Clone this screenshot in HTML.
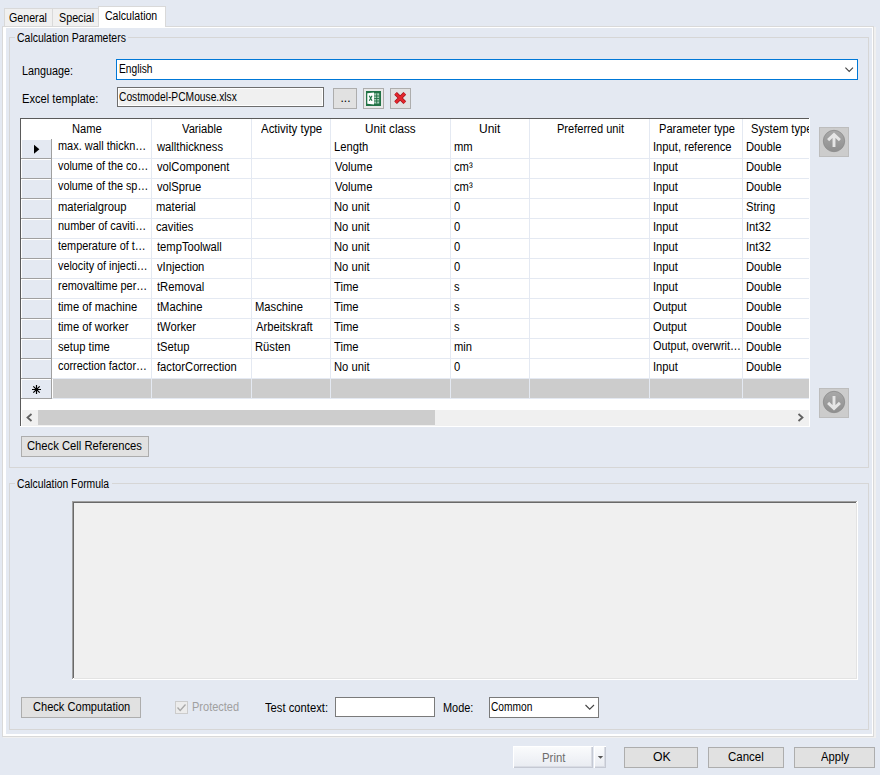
<!DOCTYPE html>
<html><head><meta charset="utf-8"><style>
html,body{margin:0;padding:0;}
body{width:880px;height:775px;position:relative;overflow:hidden;background:#e4e9f2;font-family:"Liberation Sans",sans-serif;}
div,svg{position:absolute;}
.t{white-space:pre;color:#000;transform-origin:0 0;}
</style></head><body>
<div style="left:4px;top:8px;width:49px;height:18px;background:#f0f0f0;"></div>
<div style="left:4px;top:8px;width:1px;height:18px;background:#d9d9d9;"></div>
<div style="left:4px;top:8px;width:49px;height:1px;background:#d9d9d9;"></div>
<div style="left:52px;top:8px;width:1px;height:18px;background:#d9d9d9;"></div>
<div style="left:53px;top:8px;width:46px;height:18px;background:#f0f0f0;"></div>
<div style="left:53px;top:8px;width:46px;height:1px;background:#d9d9d9;"></div>
<div class="t" style="left:9.26px;top:11px;font-size:12px;line-height:15px;color:#000;transform:scaleX(0.8889);">General</div>
<div class="t" style="left:58.51px;top:11px;font-size:12px;line-height:15px;color:#000;transform:scaleX(0.8945);">Special</div>
<div style="left:2px;top:26px;width:872px;height:711px;background:#d9d9d9;"></div>
<div style="left:874px;top:27px;width:2px;height:711px;background:#f0f0f0;"></div>
<div style="left:3px;top:737px;width:873px;height:1px;background:#f0f0f0;"></div>
<div style="left:3px;top:27px;width:870px;height:709px;background:#ffffff;"></div>
<div style="left:6px;top:28px;width:866px;height:706px;background:#e4e9f2;"></div>
<div style="left:98px;top:6px;width:68px;height:21px;background:#d9d9d9;"></div>
<div style="left:99px;top:7px;width:66px;height:21px;background:#ffffff;"></div>
<div class="t" style="left:105.46px;top:9px;font-size:12px;line-height:15px;color:#000;transform:scaleX(0.8796);">Calculation</div>
<div style="left:9px;top:37px;width:860px;height:431px;box-sizing:border-box;border:1px solid #d6d6d6;"></div>
<div style="left:15px;top:36px;width:113px;height:3px;background:#e4e9f2;"></div>
<div class="t" style="left:17.22px;top:31px;font-size:12px;line-height:15px;color:#000;transform:scaleX(0.8732);">Calculation Parameters</div>
<div class="t" style="left:21.71px;top:64px;font-size:12px;line-height:15px;color:#000;transform:scaleX(0.9004);">Language:</div>
<div class="t" style="left:21.69px;top:92px;font-size:12px;line-height:15px;color:#000;transform:scaleX(0.9292);">Excel template:</div>
<div style="left:116px;top:59px;width:742px;height:21px;background:#fff;box-sizing:border-box;border:1px solid #0078d7;"></div>
<div class="t" style="left:119.16px;top:62px;font-size:12px;line-height:15px;color:#000;transform:scaleX(0.8512);">English</div>
<svg style="left:845px;top:66px" width="10" height="7" viewBox="0 0 10 7"><path d="M0.4 1.6 L4.2 5.4 L8 1.6" fill="none" stroke="#444" stroke-width="1.1"/></svg>
<div style="left:117px;top:87px;width:207px;height:20px;background:#ffffff;box-sizing:border-box;border:1px solid #6d6d6d;"></div>
<div style="left:119px;top:89px;width:203px;height:16px;background:#f0f0f0;"></div>
<div class="t" style="left:119.48px;top:90px;font-size:12px;line-height:15px;color:#000;transform:scaleX(0.8536);">Costmodel-PCMouse.xlsx</div>
<div style="left:333px;top:88px;width:24px;height:21px;background:#e1e1e1;box-sizing:border-box;border:1px solid #adadad;"></div>
<div class="t" style="left:340.50px;top:91px;font-size:12px;line-height:15px;color:#000;">...</div>
<div style="left:363px;top:88px;width:21px;height:21px;background:#e9e9e9;box-sizing:border-box;border:1px solid #adadad;"></div>
<div style="left:390px;top:88px;width:21px;height:21px;background:#e1e1e1;box-sizing:border-box;border:1px solid #adadad;"></div>
<svg style="left:366px;top:91px" width="15" height="15" viewBox="0 0 15 15"><rect x="0" y="0" width="15" height="15" fill="#217346"/>
<rect x="8.2" y="2.3" width="5" height="10.2" fill="#a9cdb7"/>
<path d="M8.2 5 H13.2 M8.2 7.5 H13.2 M8.2 10 H13.2 M10.7 2.3 V12.5" stroke="#217346" stroke-width="0.9"/>
<path d="M1.3 2.2 L8 1.5 L8 13.5 L1.3 12.8 Z" fill="#ffffff"/>
<path d="M3.3 4.8 L6 9.8 M6 4.8 L3.3 9.8" stroke="#217346" stroke-width="1.2"/></svg>
<svg style="left:393px;top:91px" width="15" height="15" viewBox="0 0 15 15"><path d="M2.6 2.4 L11.8 11.6 M11.8 2.4 L2.6 11.6" stroke="#9c1218" stroke-width="3.8"/>
<path d="M2.6 2.4 L11.8 11.6 M11.8 2.4 L2.6 11.6" stroke="#e4262c" stroke-width="2.5"/></svg>
<div style="left:20px;top:118px;width:790px;height:309px;background:#ffffff;"></div>
<div style="left:20px;top:118px;width:789px;height:309px;overflow:hidden;">
<div style="left:0px;top:0px;width:790px;height:1px;background:#5a5a5a;"></div>
<div style="left:0px;top:0px;width:1px;height:308px;background:#5a5a5a;"></div>
<div style="left:131px;top:1px;width:1px;height:279px;background:#e4e9f2;"></div>
<div style="left:231px;top:1px;width:1px;height:279px;background:#e4e9f2;"></div>
<div style="left:310px;top:1px;width:1px;height:279px;background:#e4e9f2;"></div>
<div style="left:430px;top:1px;width:1px;height:279px;background:#e4e9f2;"></div>
<div style="left:509px;top:1px;width:1px;height:279px;background:#e4e9f2;"></div>
<div style="left:629px;top:1px;width:1px;height:279px;background:#e4e9f2;"></div>
<div style="left:722px;top:1px;width:1px;height:279px;background:#e4e9f2;"></div>
<div class="t" style="left:52.09px;top:4px;font-size:12px;line-height:15px;color:#000;transform:scaleX(0.9248);">Name</div>
<div class="t" style="left:161.95px;top:4px;font-size:12px;line-height:15px;color:#000;transform:scaleX(0.9323);">Variable</div>
<div class="t" style="left:241.08px;top:4px;font-size:12px;line-height:15px;color:#000;transform:scaleX(0.9549);">Activity type</div>
<div class="t" style="left:345.30px;top:4px;font-size:12px;line-height:15px;color:#000;transform:scaleX(0.9752);">Unit class</div>
<div class="t" style="left:459.38px;top:4px;font-size:12px;line-height:15px;color:#000;transform:scaleX(0.9987);">Unit</div>
<div class="t" style="left:537.09px;top:4px;font-size:12px;line-height:15px;color:#000;transform:scaleX(0.9214);">Preferred unit</div>
<div class="t" style="left:638.69px;top:4px;font-size:12px;line-height:15px;color:#000;transform:scaleX(0.9252);">Parameter type</div>
<div class="t" style="left:730.59px;top:4px;font-size:12px;line-height:15px;color:#000;transform:scaleX(0.9300);">System type</div>
<div style="left:2px;top:22px;width:29px;height:18px;background:#e4e9f2;"></div>
<div style="left:1px;top:40px;width:31px;height:1px;background:#a0a0a0;"></div>
<div style="left:32px;top:40px;width:758px;height:1px;background:#e4e9f2;"></div>
<div class="t" style="left:37.67px;top:21px;font-size:12px;line-height:15px;color:#000;transform:scaleX(0.9123);">max. wall thickn…</div>
<div class="t" style="left:136.82px;top:22px;font-size:12px;line-height:15px;color:#000;transform:scaleX(0.9340);">wallthickness</div>
<div class="t" style="left:313.68px;top:22px;font-size:12px;line-height:15px;color:#000;transform:scaleX(0.9340);">Length</div>
<div class="t" style="left:433.86px;top:22px;font-size:12px;line-height:15px;color:#000;transform:scaleX(0.9340);">mm</div>
<div class="t" style="left:632.57px;top:22px;font-size:12px;line-height:15px;color:#000;transform:scaleX(0.9340);">Input, reference</div>
<div class="t" style="left:725.68px;top:22px;font-size:12px;line-height:15px;color:#000;transform:scaleX(0.9340);">Double</div>
<div style="left:2px;top:42px;width:29px;height:18px;background:#e4e9f2;"></div>
<div style="left:1px;top:60px;width:31px;height:1px;background:#a0a0a0;"></div>
<div style="left:32px;top:60px;width:758px;height:1px;background:#e4e9f2;"></div>
<div class="t" style="left:38.36px;top:41px;font-size:12px;line-height:15px;color:#000;transform:scaleX(0.9016);">volume of the co…</div>
<div class="t" style="left:136.76px;top:42px;font-size:12px;line-height:15px;color:#000;transform:scaleX(0.9340);">volComponent</div>
<div class="t" style="left:314.55px;top:42px;font-size:12px;line-height:15px;color:#000;transform:scaleX(0.9340);">Volume</div>
<div class="t" style="left:434.12px;top:42px;font-size:12px;line-height:15px;color:#000;transform:scaleX(0.9340);">cm³</div>
<div class="t" style="left:632.57px;top:42px;font-size:12px;line-height:15px;color:#000;transform:scaleX(0.9340);">Input</div>
<div class="t" style="left:725.68px;top:42px;font-size:12px;line-height:15px;color:#000;transform:scaleX(0.9340);">Double</div>
<div style="left:2px;top:62px;width:29px;height:18px;background:#e4e9f2;"></div>
<div style="left:1px;top:80px;width:31px;height:1px;background:#a0a0a0;"></div>
<div style="left:32px;top:80px;width:758px;height:1px;background:#e4e9f2;"></div>
<div class="t" style="left:38.36px;top:61px;font-size:12px;line-height:15px;color:#000;transform:scaleX(0.9016);">volume of the sp…</div>
<div class="t" style="left:136.76px;top:62px;font-size:12px;line-height:15px;color:#000;transform:scaleX(0.9340);">volSprue</div>
<div class="t" style="left:314.55px;top:62px;font-size:12px;line-height:15px;color:#000;transform:scaleX(0.9340);">Volume</div>
<div class="t" style="left:434.12px;top:62px;font-size:12px;line-height:15px;color:#000;transform:scaleX(0.9340);">cm³</div>
<div class="t" style="left:632.57px;top:62px;font-size:12px;line-height:15px;color:#000;transform:scaleX(0.9340);">Input</div>
<div class="t" style="left:725.68px;top:62px;font-size:12px;line-height:15px;color:#000;transform:scaleX(0.9340);">Double</div>
<div style="left:2px;top:82px;width:29px;height:18px;background:#e4e9f2;"></div>
<div style="left:1px;top:100px;width:31px;height:1px;background:#a0a0a0;"></div>
<div style="left:32px;top:100px;width:758px;height:1px;background:#e4e9f2;"></div>
<div class="t" style="left:37.66px;top:82px;font-size:12px;line-height:15px;color:#000;transform:scaleX(0.9340);">materialgroup</div>
<div class="t" style="left:136.06px;top:82px;font-size:12px;line-height:15px;color:#000;transform:scaleX(0.9340);">material</div>
<div class="t" style="left:313.68px;top:82px;font-size:12px;line-height:15px;color:#000;transform:scaleX(0.9340);">No unit</div>
<div class="t" style="left:434.16px;top:82px;font-size:12px;line-height:15px;color:#000;transform:scaleX(0.9340);">0</div>
<div class="t" style="left:632.57px;top:82px;font-size:12px;line-height:15px;color:#000;transform:scaleX(0.9340);">Input</div>
<div class="t" style="left:726.09px;top:82px;font-size:12px;line-height:15px;color:#000;transform:scaleX(0.9340);">String</div>
<div style="left:2px;top:102px;width:29px;height:18px;background:#e4e9f2;"></div>
<div style="left:1px;top:120px;width:31px;height:1px;background:#a0a0a0;"></div>
<div style="left:32px;top:120px;width:758px;height:1px;background:#e4e9f2;"></div>
<div class="t" style="left:37.67px;top:101px;font-size:12px;line-height:15px;color:#000;transform:scaleX(0.9122);">number of caviti…</div>
<div class="t" style="left:136.32px;top:102px;font-size:12px;line-height:15px;color:#000;transform:scaleX(0.9340);">cavities</div>
<div class="t" style="left:313.68px;top:102px;font-size:12px;line-height:15px;color:#000;transform:scaleX(0.9340);">No unit</div>
<div class="t" style="left:434.16px;top:102px;font-size:12px;line-height:15px;color:#000;transform:scaleX(0.9340);">0</div>
<div class="t" style="left:632.57px;top:102px;font-size:12px;line-height:15px;color:#000;transform:scaleX(0.9340);">Input</div>
<div class="t" style="left:725.57px;top:102px;font-size:12px;line-height:15px;color:#000;transform:scaleX(0.9340);">Int32</div>
<div style="left:2px;top:122px;width:29px;height:18px;background:#e4e9f2;"></div>
<div style="left:1px;top:140px;width:31px;height:1px;background:#a0a0a0;"></div>
<div style="left:32px;top:140px;width:758px;height:1px;background:#e4e9f2;"></div>
<div class="t" style="left:38.24px;top:121px;font-size:12px;line-height:15px;color:#000;transform:scaleX(0.9062);">temperature of t…</div>
<div class="t" style="left:136.63px;top:122px;font-size:12px;line-height:15px;color:#000;transform:scaleX(0.9340);">tempToolwall</div>
<div class="t" style="left:313.68px;top:122px;font-size:12px;line-height:15px;color:#000;transform:scaleX(0.9340);">No unit</div>
<div class="t" style="left:434.16px;top:122px;font-size:12px;line-height:15px;color:#000;transform:scaleX(0.9340);">0</div>
<div class="t" style="left:632.57px;top:122px;font-size:12px;line-height:15px;color:#000;transform:scaleX(0.9340);">Input</div>
<div class="t" style="left:725.57px;top:122px;font-size:12px;line-height:15px;color:#000;transform:scaleX(0.9340);">Int32</div>
<div style="left:2px;top:142px;width:29px;height:18px;background:#e4e9f2;"></div>
<div style="left:1px;top:160px;width:31px;height:1px;background:#a0a0a0;"></div>
<div style="left:32px;top:160px;width:758px;height:1px;background:#e4e9f2;"></div>
<div class="t" style="left:38.36px;top:141px;font-size:12px;line-height:15px;color:#000;transform:scaleX(0.9007);">velocity of injecti…</div>
<div class="t" style="left:136.76px;top:142px;font-size:12px;line-height:15px;color:#000;transform:scaleX(0.9340);">vInjection</div>
<div class="t" style="left:313.68px;top:142px;font-size:12px;line-height:15px;color:#000;transform:scaleX(0.9340);">No unit</div>
<div class="t" style="left:434.16px;top:142px;font-size:12px;line-height:15px;color:#000;transform:scaleX(0.9340);">0</div>
<div class="t" style="left:632.57px;top:142px;font-size:12px;line-height:15px;color:#000;transform:scaleX(0.9340);">Input</div>
<div class="t" style="left:725.68px;top:142px;font-size:12px;line-height:15px;color:#000;transform:scaleX(0.9340);">Double</div>
<div style="left:2px;top:162px;width:29px;height:18px;background:#e4e9f2;"></div>
<div style="left:1px;top:180px;width:31px;height:1px;background:#a0a0a0;"></div>
<div style="left:32px;top:180px;width:758px;height:1px;background:#e4e9f2;"></div>
<div class="t" style="left:37.67px;top:161px;font-size:12px;line-height:15px;color:#000;transform:scaleX(0.9100);">removaltime per…</div>
<div class="t" style="left:136.63px;top:162px;font-size:12px;line-height:15px;color:#000;transform:scaleX(0.9340);">tRemoval</div>
<div class="t" style="left:314.35px;top:162px;font-size:12px;line-height:15px;color:#000;transform:scaleX(0.9340);">Time</div>
<div class="t" style="left:434.29px;top:162px;font-size:12px;line-height:15px;color:#000;transform:scaleX(0.9340);">s</div>
<div class="t" style="left:632.57px;top:162px;font-size:12px;line-height:15px;color:#000;transform:scaleX(0.9340);">Input</div>
<div class="t" style="left:725.68px;top:162px;font-size:12px;line-height:15px;color:#000;transform:scaleX(0.9340);">Double</div>
<div style="left:2px;top:182px;width:29px;height:18px;background:#e4e9f2;"></div>
<div style="left:1px;top:200px;width:31px;height:1px;background:#a0a0a0;"></div>
<div style="left:32px;top:200px;width:758px;height:1px;background:#e4e9f2;"></div>
<div class="t" style="left:38.23px;top:182px;font-size:12px;line-height:15px;color:#000;transform:scaleX(0.9340);">time of machine</div>
<div class="t" style="left:136.63px;top:182px;font-size:12px;line-height:15px;color:#000;transform:scaleX(0.9340);">tMachine</div>
<div class="t" style="left:234.68px;top:182px;font-size:12px;line-height:15px;color:#000;transform:scaleX(0.9340);">Maschine</div>
<div class="t" style="left:314.35px;top:182px;font-size:12px;line-height:15px;color:#000;transform:scaleX(0.9340);">Time</div>
<div class="t" style="left:434.29px;top:182px;font-size:12px;line-height:15px;color:#000;transform:scaleX(0.9340);">s</div>
<div class="t" style="left:633.07px;top:182px;font-size:12px;line-height:15px;color:#000;transform:scaleX(0.9340);">Output</div>
<div class="t" style="left:725.68px;top:182px;font-size:12px;line-height:15px;color:#000;transform:scaleX(0.9340);">Double</div>
<div style="left:2px;top:202px;width:29px;height:18px;background:#e4e9f2;"></div>
<div style="left:1px;top:220px;width:31px;height:1px;background:#a0a0a0;"></div>
<div style="left:32px;top:220px;width:758px;height:1px;background:#e4e9f2;"></div>
<div class="t" style="left:38.23px;top:202px;font-size:12px;line-height:15px;color:#000;transform:scaleX(0.9340);">time of worker</div>
<div class="t" style="left:136.63px;top:202px;font-size:12px;line-height:15px;color:#000;transform:scaleX(0.9340);">tWorker</div>
<div class="t" style="left:235.58px;top:202px;font-size:12px;line-height:15px;color:#000;transform:scaleX(0.9340);">Arbeitskraft</div>
<div class="t" style="left:314.35px;top:202px;font-size:12px;line-height:15px;color:#000;transform:scaleX(0.9340);">Time</div>
<div class="t" style="left:434.29px;top:202px;font-size:12px;line-height:15px;color:#000;transform:scaleX(0.9340);">s</div>
<div class="t" style="left:633.07px;top:202px;font-size:12px;line-height:15px;color:#000;transform:scaleX(0.9340);">Output</div>
<div class="t" style="left:725.68px;top:202px;font-size:12px;line-height:15px;color:#000;transform:scaleX(0.9340);">Double</div>
<div style="left:2px;top:222px;width:29px;height:18px;background:#e4e9f2;"></div>
<div style="left:1px;top:240px;width:31px;height:1px;background:#a0a0a0;"></div>
<div style="left:32px;top:240px;width:758px;height:1px;background:#e4e9f2;"></div>
<div class="t" style="left:38.09px;top:222px;font-size:12px;line-height:15px;color:#000;transform:scaleX(0.9340);">setup time</div>
<div class="t" style="left:136.63px;top:222px;font-size:12px;line-height:15px;color:#000;transform:scaleX(0.9340);">tSetup</div>
<div class="t" style="left:234.68px;top:222px;font-size:12px;line-height:15px;color:#000;transform:scaleX(0.9340);">Rüsten</div>
<div class="t" style="left:314.35px;top:222px;font-size:12px;line-height:15px;color:#000;transform:scaleX(0.9340);">Time</div>
<div class="t" style="left:433.86px;top:222px;font-size:12px;line-height:15px;color:#000;transform:scaleX(0.9340);">min</div>
<div class="t" style="left:633.08px;top:221px;font-size:12px;line-height:15px;color:#000;transform:scaleX(0.9101);">Output, overwrit…</div>
<div class="t" style="left:725.68px;top:222px;font-size:12px;line-height:15px;color:#000;transform:scaleX(0.9340);">Double</div>
<div style="left:2px;top:242px;width:29px;height:18px;background:#e4e9f2;"></div>
<div style="left:1px;top:260px;width:31px;height:1px;background:#a0a0a0;"></div>
<div style="left:32px;top:260px;width:758px;height:1px;background:#e4e9f2;"></div>
<div class="t" style="left:37.94px;top:241px;font-size:12px;line-height:15px;color:#000;transform:scaleX(0.9072);">correction factor…</div>
<div class="t" style="left:136.64px;top:242px;font-size:12px;line-height:15px;color:#000;transform:scaleX(0.9340);">factorCorrection</div>
<div class="t" style="left:313.68px;top:242px;font-size:12px;line-height:15px;color:#000;transform:scaleX(0.9340);">No unit</div>
<div class="t" style="left:434.16px;top:242px;font-size:12px;line-height:15px;color:#000;transform:scaleX(0.9340);">0</div>
<div class="t" style="left:632.57px;top:242px;font-size:12px;line-height:15px;color:#000;transform:scaleX(0.9340);">Input</div>
<div class="t" style="left:725.68px;top:242px;font-size:12px;line-height:15px;color:#000;transform:scaleX(0.9340);">Double</div>
<div style="left:31px;top:21px;width:1px;height:260px;background:#a0a0a0;"></div>
<svg style="left:14px;top:26px" width="6" height="11" viewBox="0 0 6 11"><path d="M0 0.7 L5.4 5.2 L0 9.7 Z" fill="#000"/></svg>
<div style="left:2px;top:262px;width:29px;height:18px;background:#e4e9f2;"></div>
<div style="left:1px;top:280px;width:31px;height:1px;background:#a0a0a0;"></div>
<div style="left:33px;top:261px;width:757px;height:19px;background:#cccccc;"></div>
<div style="left:131px;top:261px;width:1px;height:19px;background:#e4e9f2;"></div>
<div style="left:231px;top:261px;width:1px;height:19px;background:#e4e9f2;"></div>
<div style="left:310px;top:261px;width:1px;height:19px;background:#e4e9f2;"></div>
<div style="left:430px;top:261px;width:1px;height:19px;background:#e4e9f2;"></div>
<div style="left:509px;top:261px;width:1px;height:19px;background:#e4e9f2;"></div>
<div style="left:629px;top:261px;width:1px;height:19px;background:#e4e9f2;"></div>
<div style="left:722px;top:261px;width:1px;height:19px;background:#e4e9f2;"></div>
<div style="left:32px;top:280px;width:758px;height:1px;background:#e4e9f2;"></div>
<svg style="left:11px;top:266px" width="11" height="11" viewBox="0 0 11 11"><path d="M5.5 1 V10 M1 5.5 H10 M2.3 2.3 L8.7 8.7 M8.7 2.3 L2.3 8.7" stroke="#000" stroke-width="1.2"/></svg>
<div style="left:2px;top:292px;width:787px;height:16px;background:#f0f0f0;"></div>
<div style="left:18px;top:292px;width:397px;height:15px;background:#cdcdcd;"></div>
<svg style="left:5px;top:295px" width="8" height="9" viewBox="0 0 8 9"><path d="M6.5 1 L2.5 4.5 L6.5 8" fill="none" stroke="#606060" stroke-width="1.8"/></svg>
<svg style="left:777px;top:295px" width="8" height="9" viewBox="0 0 8 9"><path d="M1.5 1 L5.5 4.5 L1.5 8" fill="none" stroke="#606060" stroke-width="1.8"/></svg>
</div>
<div style="left:819px;top:127px;width:30px;height:30px;background:#cccccc;box-sizing:border-box;border:1px solid #bdbdbd;"></div>
<svg style="left:822px;top:129px" width="24" height="24" viewBox="-12 -12 24 24"><defs><linearGradient id="g127" x1="0" y1="0" x2="0" y2="1"><stop offset="0" stop-color="#a9a9a9"/><stop offset="1" stop-color="#8f8f8f"/></linearGradient></defs><circle cx="0" cy="0" r="10.7" fill="url(#g127)" stroke="#8a8a8a" stroke-width="0.8"/><path d="M-5.9 -0.9 L0 -6.6 L5.9 -0.9 M0 -5.8 L0 6" fill="none" stroke="#e6e6e6" stroke-width="2.9" stroke-linecap="butt" stroke-linejoin="miter"/></svg>
<div style="left:819px;top:388px;width:30px;height:30px;background:#cccccc;box-sizing:border-box;border:1px solid #bdbdbd;"></div>
<svg style="left:822px;top:390px" width="24" height="24" viewBox="-12 -12 24 24"><defs><linearGradient id="g388" x1="0" y1="0" x2="0" y2="1"><stop offset="0" stop-color="#a9a9a9"/><stop offset="1" stop-color="#8f8f8f"/></linearGradient></defs><circle cx="0" cy="0" r="10.7" fill="url(#g388)" stroke="#8a8a8a" stroke-width="0.8"/><path d="M-5.9 0.9 L0 6.6 L5.9 0.9 M0 5.8 L0 -6" fill="none" stroke="#e6e6e6" stroke-width="2.9" stroke-linecap="butt" stroke-linejoin="miter"/></svg>
<div style="left:21px;top:436px;width:128px;height:21px;background:#e1e1e1;box-sizing:border-box;border:1px solid #adadad;"></div>
<div class="t" style="left:27.43px;top:439px;font-size:12px;line-height:15px;color:#000;transform:scaleX(0.9369);">Check Cell References</div>
<div style="left:9px;top:483px;width:860px;height:247px;box-sizing:border-box;border:1px solid #d6d6d6;"></div>
<div style="left:15px;top:482px;width:97px;height:3px;background:#e4e9f2;"></div>
<div class="t" style="left:17.22px;top:477px;font-size:12px;line-height:15px;color:#000;transform:scaleX(0.8624);">Calculation Formula</div>
<div style="left:72px;top:501px;width:786px;height:179px;background:#ffffff;"></div>
<div style="left:72px;top:501px;width:785px;height:1px;background:#a0a0a0;"></div>
<div style="left:72px;top:501px;width:1px;height:178px;background:#a0a0a0;"></div>
<div style="left:73px;top:502px;width:783px;height:1px;background:#696969;"></div>
<div style="left:73px;top:502px;width:1px;height:176px;background:#696969;"></div>
<div style="left:74px;top:503px;width:783px;height:176px;background:#e3e3e3;"></div>
<div style="left:74px;top:503px;width:782px;height:175px;background:#f0f0f0;"></div>
<div style="left:21px;top:697px;width:120px;height:21px;background:#e1e1e1;box-sizing:border-box;border:1px solid #adadad;"></div>
<div class="t" style="left:32.74px;top:700px;font-size:12px;line-height:15px;color:#000;transform:scaleX(0.9231);">Check Computation</div>
<div style="left:175px;top:701px;width:13px;height:13px;background:#ececec;box-sizing:border-box;border:1px solid #cccccc;"></div>
<svg style="left:176px;top:702px" width="11" height="11" viewBox="0 0 11 11"><path d="M1.5 5.5 L4.2 8.5 L9.5 2.5" fill="none" stroke="#a8a8a8" stroke-width="1.3"/></svg>
<div class="t" style="left:191.60px;top:700px;font-size:12px;line-height:15px;color:#a0a0a0;transform:scaleX(0.9172);">Protected</div>
<div class="t" style="left:264.75px;top:701px;font-size:12px;line-height:15px;color:#000;transform:scaleX(0.9357);">Test context:</div>
<div style="left:335px;top:697px;width:100px;height:20px;background:#ffffff;box-sizing:border-box;border:1px solid #7a7a7a;"></div>
<div class="t" style="left:442.90px;top:701px;font-size:12px;line-height:15px;color:#000;transform:scaleX(0.9114);">Mode:</div>
<div style="left:489px;top:697px;width:110px;height:21px;background:#ffffff;box-sizing:border-box;border:1px solid #7a7a7a;"></div>
<div class="t" style="left:491.38px;top:700px;font-size:12px;line-height:15px;color:#000;transform:scaleX(0.8501);">Common</div>
<svg style="left:585px;top:704px" width="10" height="7" viewBox="0 0 10 7"><path d="M0.5 1 L4.7 5.2 L9 1" fill="none" stroke="#444" stroke-width="1.1"/></svg>
<div style="left:513px;top:746px;width:80px;height:22px;background:linear-gradient(#fbfcfd,#e8ebf1);box-shadow:inset 1px 1px 0 #ffffff, inset -1px -1px 0 #c5c9d3, inset -2px -2px 0 #d9dce4;"></div>
<div style="left:594px;top:746px;width:12px;height:22px;background:linear-gradient(#fbfcfd,#e8ebf1);box-shadow:inset 1px 1px 0 #ffffff, inset -1px -1px 0 #c5c9d3, inset -2px -2px 0 #d9dce4;"></div>
<div class="t" style="left:541.77px;top:751px;font-size:12px;line-height:15px;color:#6d6d6d;transform:scaleX(0.9491);">Print</div>
<svg style="left:597px;top:755px" width="7" height="5" viewBox="0 0 7 5"><path d="M0.8 1 H6.2 L3.5 3.8 Z" fill="#555"/></svg>
<div style="left:624px;top:747px;width:74px;height:21px;background:#e1e1e1;box-sizing:border-box;border:1px solid #adadad;"></div>
<div class="t" style="left:652.52px;top:750px;font-size:12px;line-height:15px;color:#000;transform:scaleX(1.0220);">OK</div>
<div style="left:708px;top:747px;width:76px;height:21px;background:#e1e1e1;box-sizing:border-box;border:1px solid #adadad;"></div>
<div class="t" style="left:727.52px;top:750px;font-size:12px;line-height:15px;color:#000;transform:scaleX(0.9571);">Cancel</div>
<div style="left:794px;top:747px;width:81px;height:21px;background:#e1e1e1;box-sizing:border-box;border:1px solid #adadad;"></div>
<div class="t" style="left:820.88px;top:750px;font-size:12px;line-height:15px;color:#000;transform:scaleX(0.9342);">Apply</div>
</body></html>
